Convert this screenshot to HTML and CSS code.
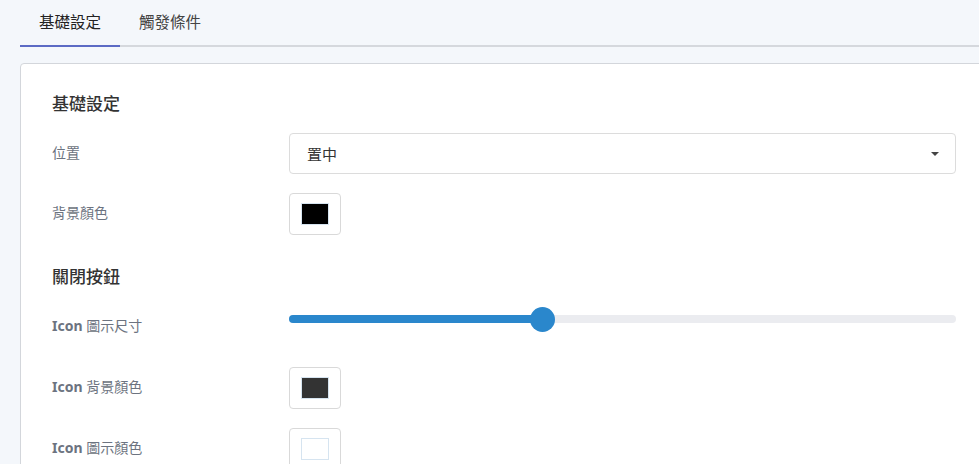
FILE: index.html
```html
<!DOCTYPE html>
<html lang="zh-Hant">
<head>
    <meta charset="UTF-8">
    <meta name="viewport" content="width=device-width, initial-scale=1.0">
    <title>設定</title>
    <link rel="stylesheet" href="styles.css">
</head>
<body>
    <div class="page">
        <div class="tabs">
            <div class="tab active">基礎設定</div>
            <div class="tab">觸發條件</div>
        </div>
        <div class="card">
            <div class="section">
                <h2 class="section-title">基礎設定</h2>
                <div class="row">
                    <div class="label">位置</div>
                    <div class="select">
                        <span>置中</span>
                        <span class="caret"></span>
                    </div>
                </div>
                <div class="row">
                    <div class="label">背景顏色</div>
                    <div class="swatch"><span class="chip" style="background:#000000"></span></div>
                </div>
            </div>
            <div class="section">
                <h2 class="section-title">關閉按鈕</h2>
                <div class="row">
                    <div class="label"><b>Icon</b> 圖示尺寸</div>
                    <div class="slider">
                        <div class="track">
                            <div class="fill" style="width:38%"></div>
                            <div class="thumb" style="left:38%"></div>
                        </div>
                    </div>
                </div>
                <div class="row">
                    <div class="label"><b>Icon</b> 背景顏色</div>
                    <div class="swatch"><span class="chip" style="background:#333333"></span></div>
                </div>
                <div class="row">
                    <div class="label"><b>Icon</b> 圖示顏色</div>
                    <div class="swatch"><span class="chip" style="background:#ffffff"></span></div>
                </div>
            </div>
        </div>
    </div>
</body>
</html>
```

FILE: styles.css
```css
body { margin: 0; background: #f4f7fb; overflow: hidden; font-family: "Noto Sans", "Noto Sans CJK TC", sans-serif; color: #333; }
.page { width: 969px; padding-left: 20px; }

.tabs { display: flex; border-bottom: 2px solid #d5d8dd; }
.tab { padding: 0 19px; line-height: 45px; font-size: 15.5px; color: #444; }
.tab.active { color: #222; border-bottom: 2px solid #5c6ac4; margin-bottom: -2px; }

.card { box-sizing: border-box; width: 968px; margin-top: 16px; background: #fff; border: 1px solid #d3d6db; border-radius: 4px; padding: 28px 31px; }
.section { display: flow-root; }
.section + .section { margin-top: 11px; }
.section-title { margin: 0 0 17px; font-size: 17px; line-height: 24px; font-weight: 500; color: #333; }

.row { display: grid; grid-template-columns: 237px 1fr; margin-bottom: 19px; }
.label { padding-top: 10px; font-size: 14px; line-height: 20px; color: #6c7380; }
.label b { font-weight: 700; }

.select { box-sizing: border-box; height: 41px; display: flex; align-items: center; justify-content: space-between; padding: 0 16px 0 17px; border: 1px solid #dcdcdc; border-radius: 4px; font-size: 15px; color: #333; }
.caret { width: 0; height: 0; border-left: 4px solid transparent; border-right: 4px solid transparent; border-top: 4px solid #444; }

.swatch { box-sizing: border-box; width: 52px; height: 42px; display: flex; align-items: center; justify-content: center; border: 1px solid #d9d9d9; border-radius: 4px; }
.chip { box-sizing: border-box; width: 28px; height: 22px; border: 1px solid #d6e4f0; }

.slider { height: 42px; padding-top: 9px; box-sizing: border-box; }
.track { position: relative; height: 8px; border-radius: 4px; background: #ebecf0; }
.fill { height: 100%; border-radius: 4px; background: #2a87cc; }
.thumb { position: absolute; top: 50%; width: 25px; height: 25px; margin: -12.5px 0 0 -12.5px; border-radius: 50%; background: #2a87cc; }
```
